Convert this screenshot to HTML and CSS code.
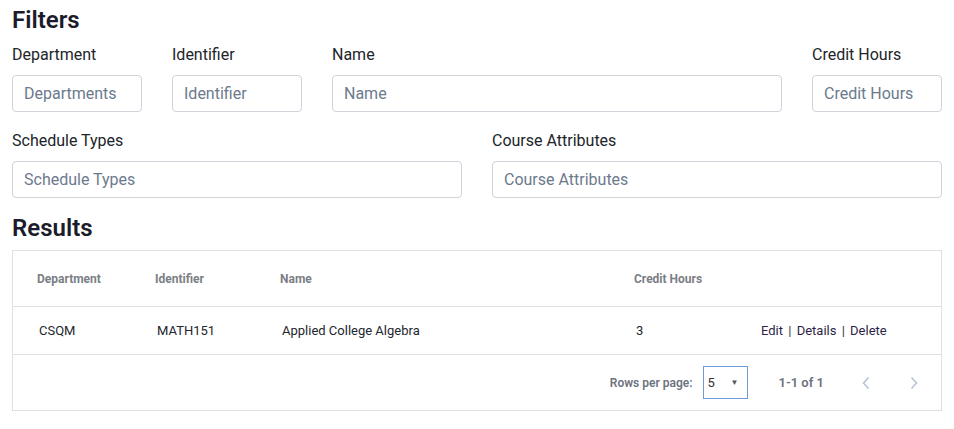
FILE: index.html
```html
<!DOCTYPE html>
<html>
<head>
<meta charset="utf-8">
<link rel="stylesheet" href="styles.css">
</head>
<body>
<div class="page">
  <h2 class="title">Filters</h2>
  <div class="filters-top">
    <div class="field"><label>Department</label><input class="input" placeholder="Departments"></div>
    <div class="field"><label>Identifier</label><input class="input" placeholder="Identifier"></div>
    <div class="field"><label>Name</label><input class="input" placeholder="Name"></div>
    <div class="field"><label>Credit Hours</label><input class="input" placeholder="Credit Hours"></div>
  </div>
  <div class="filters-bottom">
    <div class="field"><label>Schedule Types</label><input class="input" placeholder="Schedule Types"></div>
    <div class="field"><label>Course Attributes</label><input class="input" placeholder="Course Attributes"></div>
  </div>
  <h2 class="title results-title">Results</h2>
  <div class="card">
    <div class="row head">
      <div class="c c1">Department</div>
      <div class="c c2">Identifier</div>
      <div class="c c3">Name</div>
      <div class="c c4">Credit Hours</div>
      <div class="c c5"></div>
    </div>
    <div class="row body">
      <div class="c c1 d1">CSQM</div>
      <div class="c c2 d1">MATH151</div>
      <div class="c c3 d1">Applied College Algebra</div>
      <div class="c c4 d1">3</div>
      <div class="c c5 links"><a>Edit</a> | <a>Details</a> | <a>Delete</a></div>
    </div>
    <div class="footer">
      <span class="rpp">Rows per page:</span>
      <div class="select"><span>5</span><span class="caret">▼</span></div>
      <span class="range">1-1 of 1</span>
      <svg class="chev" width="10" height="14" viewBox="0 0 10 14"><path d="M7.5 1.5 L2.5 7 L7.5 12.5" fill="none" stroke="#b6c2d6" stroke-width="1.6"/></svg>
      <svg class="chev next" width="10" height="14" viewBox="0 0 10 14"><path d="M2.5 1.5 L7.5 7 L2.5 12.5" fill="none" stroke="#b6c2d6" stroke-width="1.6"/></svg>
    </div>
  </div>
</div>
</body>
</html>
```
FILE: styles.css
```css
* { box-sizing: border-box; }
body {
  margin: 0;
  font-family: Roboto, "Open Sans", sans-serif;
  color: #212529;
  background: #fff;
}
.page { padding: 0 12px; }
.title {
  margin: 0;
  font-size: 24px;
  font-weight: 600;
  line-height: 40px;
  color: #1b1b2b;
}
.filters-top {
  display: grid;
  grid-template-columns: 130px 130px 450px 130px;
  column-gap: 30px;
  margin-top: 4px;
}
.filters-bottom {
  display: grid;
  grid-template-columns: 450px 450px;
  column-gap: 30px;
  margin-top: 18px;
}
.field { display: flex; flex-direction: column; }
.field label {
  font-size: 16px;
  line-height: 22px;
  margin-bottom: 9px;
}
.input {
  height: 37px;
  border: 1px solid #ced4da;
  border-radius: 4px;
  padding: 0 11px;
  font-family: inherit;
  font-size: 16px;
  color: #495057;
  outline: none;
}
.input::placeholder { color: #6c7a8d; }
.results-title { margin-top: 8px; line-height: 44px; }
.card {
  border: 1px solid #e0e0e0;
  width: 930px;
}
.row { display: flex; align-items: center; border-bottom: 1px solid #e0e0e0; }
.row.head { height: 56px; }
.row.body { height: 48px; }
.c { font-size: 12px; }
.head .c { font-weight: 700; color: #7b7e85; }
.c1 { width: 142px; padding-left: 24px; }
.c2 { width: 125px; }
.c3 { width: 354px; }
.c4 { width: 127px; }
.c5 { flex: 1; }
.d1 { font-size: 13px; color: #23262e; }
.body .c1 { padding-left: 26px; }
.body .c2, .body .c3, .body .c4 { padding-left: 2px; }
.links { font-size: 13px; color: #333; word-spacing: 2px; }
.links a { color: #2e1f47; word-spacing: 0; }
.footer {
  height: 55px;
  display: flex;
  align-items: center;
  justify-content: flex-end;
  font-size: 12px;
  color: #6e7380;
  padding-right: 22px;
}
.rpp { font-weight: 600; margin-right: 10px; }
.select {
  width: 45px;
  height: 33px;
  border: 1px solid #6f9ad8;
  display: flex;
  align-items: center;
  justify-content: space-between;
  padding: 0 8px 0 4px;
  font-size: 13px;
  color: #333;
}
.caret { font-size: 8px; color: #555; }
.range { margin-left: 31px; margin-right: 37px; font-weight: 600; font-size: 13px; }
.chev.next { margin-left: 38px; }
```
